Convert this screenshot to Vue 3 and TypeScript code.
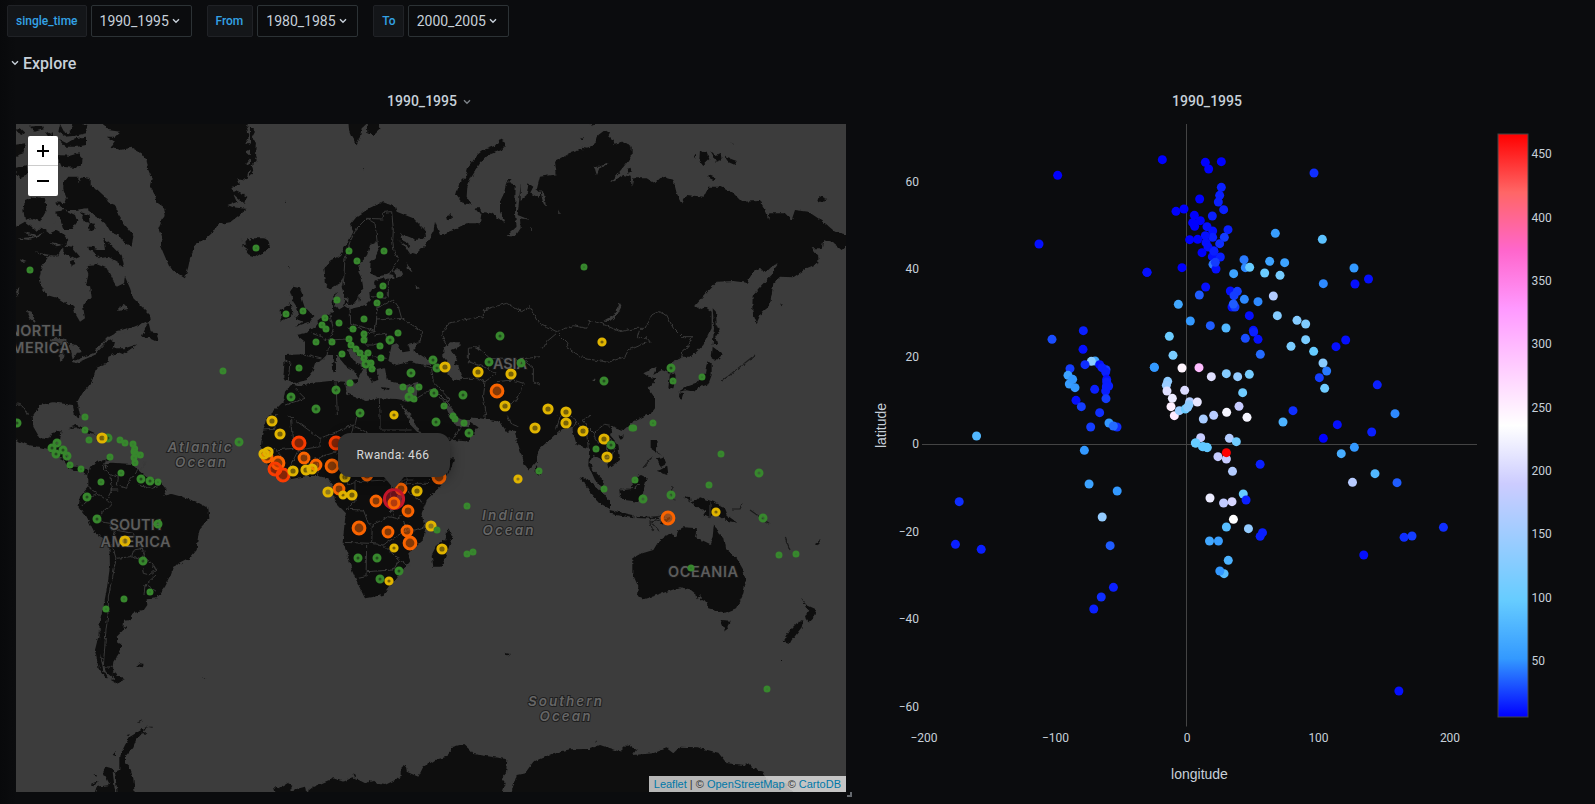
<script setup lang="ts">
interface Tile { x: number; y: number; w: number; h: number; ox: number; oy: number; land: string; water?: string; border?: string }

const variables = [
  { label: 'single_time', value: '1990_1995' },
  { label: 'From', value: '1980_1985' },
  { label: 'To', value: '2000_2005' },
]

// Map tiles hold their outlines at three units per screen pixel.
const tiles: Tile[] = [
  {
    x: 0, y: 115, w: 250, h: 300, ox: 0, oy: 0,
    land: 'M310,27L325,45 360,50 345,65 320,65 345,80 335,95 360,105 395,98 425,115 440,135 445,165 455,190 450,215 465,240 470,262 490,275 497,300 485,315 475,340 485,370 480,390 495,425 510,460 530,475 555,490 565,455 570,430 585,390 610,378 640,350 655,328 690,322 725,295 742,282 700,277 682,270 710,260 700,238 735,267 742,245 700,225 695,215 720,210 712,190 738,195 745,170 762,150 735,148 755,125 738,110 765,95 738,85 748,60 740,40 745,20 310,20Z M722,372L735,385 745,372 755,385 770,370 785,380 800,368 808,395 790,418 765,427 745,418 735,405 745,400 725,392 740,388Z M48,335L75,320 95,335 110,350 125,335 150,355 170,345 195,360 205,375 190,395 175,420 145,425 125,455 118,490 128,520 140,540 175,550 205,570 220,570 225,595 240,620 255,610 250,580 255,565 275,545 270,515 258,510 265,480 260,450 290,448 320,460 335,490 350,515 372,505 375,485 390,520 400,550 430,580 450,600 452,615 395,638 350,648 320,672 345,668 345,700 375,700 412,688 370,718 355,712 325,725 322,742 290,755 275,800 240,845 232,860 240,900 225,900 218,870 160,862 120,870 100,900 40,900 40,335Z M445,620L425,665 445,668 470,680 475,672 468,655 452,652 450,640Z M190,205L205,185 235,185 235,205 250,185 272,190 272,212 290,222 315,245 325,262 345,270 355,300 375,330 400,360 395,395 375,385 355,360 330,350 315,325 285,300 260,280 225,285 200,285 165,262 195,265 200,250 190,225Z M310,370L335,390 365,420 372,455 350,440 325,425 300,430 270,400 295,405 315,405Z M175,72L200,85 225,70 258,65 258,90 230,95 195,95Z M170,120L210,122 235,115 248,130 245,155 220,158 185,155Z M180,27L192,50 205,58 220,30 240,27 262,30 258,55 225,62 195,65 175,50Z M48,45L62,40 78,55 60,60Z M90,35L125,30 130,42 105,50Z M40,90L75,85 70,115 40,125Z M40,160L80,150 85,180 60,190Z M70,285L75,255 100,245 135,250 140,285 120,320 95,310 75,315Z M165,290L195,285 225,300 232,320 215,345 190,345 180,310Z M240,290L265,300 270,325 255,320Z M190,390L215,395 240,425 225,432 190,415Z M265,330L280,325 285,340 270,348Z M210,440l12,-5 4,12 -14,5Z M265,395l15,0 5,15 -18,-5Z M135,50l12,8 12,-6 0,8 -15,4Z M852,258l6,-4 0,6Z',
    water: 'M145,680L165,665 195,672 205,685 185,690Z M178,700L190,700 190,735 180,740Z M205,685L230,690 245,710 230,715 218,735 212,700Z M216,740L290,710 292,716 225,746Z M285,706L325,665 380,640 385,645 330,670 290,714Z M325,665L350,655 355,690 340,700 345,680 325,672Z M80,585L95,590 107,622 90,610Z M60,430l20,8 -15,4Z M105,412L180,425 178,430 125,420Z M150,380L190,390 170,394Z M48,370l70,-5 -30,10Z M355,575l20,-5 10,12 -30,6Z M48,530l10,-15 -4,30Z M70,350l40,10 20,-8 -18,18Z M155,310l10,5 5,20 -10,-8Z',
    border: 'M48,868C65,862 75,885 82,900',
  },
  {
    x: 250, y: 115, w: 290, h: 300, ox: 0, oy: 0,
    land: 'M0,370L40,370 52,372 60,395 40,412 15,427 0,422Z M0,35L15,50 5,70 18,80 15,120 20,138 5,150 10,165 0,185Z M295,20L385,20 388,45 372,60 352,52 350,27 335,40 330,65 320,88 305,65 297,45Z M765,80L750,72 735,92 700,105 675,125 655,155 645,190 628,205 618,240 635,262 665,270 650,245 652,215 665,185 690,145 715,120 755,105 765,92Z M220,460L225,505 240,522 270,505 280,490 275,515 282,545 295,572 315,565 325,540 340,520 335,490 325,470 330,445 350,425 360,390 380,380 390,395 375,430 362,440 360,470 375,485 420,478 430,480 430,492 390,490 372,500 375,520 358,530 360,555 345,570 330,575 300,582 285,572 265,585 255,570 250,545 265,530 250,540 248,560 250,590 230,600 205,620 190,640 165,655 140,660 165,680 165,718 105,720 100,790 125,800 135,807 150,800 170,795 185,775 195,745 215,735 230,720 260,720 285,750 310,765 325,790 335,772 335,760 348,762 310,735 290,705 305,700 330,730 350,755 350,775 365,800 385,795 380,765 405,760 410,790 430,805 470,810 505,800 500,845 475,858 440,852 385,850 350,858 315,845 290,835 285,800 240,798 175,805 150,815 125,808 105,830 100,860 60,900 870,900 870,250 840,235 850,215 835,205 830,240 812,255 812,205 808,250 803,300 840,315 810,310 812,340 795,365 770,363 800,335 795,300 797,210 770,200 762,235 750,260 750,290 765,325 725,295 695,290 690,325 650,325 610,345 570,360 555,320 550,350 530,385 500,415 480,408 475,385 455,375 450,355 500,375 528,365 525,345 490,310 440,290 435,275 400,262 380,270 350,285 320,305 300,330 310,350 295,380 270,420 240,440Z M130,515L150,520 160,540 155,550 165,580 190,605 180,620 135,635 158,620 135,610 147,600 140,575 130,560 120,530Z M92,585L122,565 128,600 95,618Z M295,795L325,792 320,806Z M245,745L258,745 258,770 247,772Z M250,720h8v20h-6Z M395,817L422,820 420,825 395,822Z M475,815l18,-7 -6,12Z M285,545l8,2 -2,18 -12,8Z M325,545l6,0 -4,18Z M870,185V235L860,225Z M675,280l15,0 5,18 -12,-8Z M590,300l12,-2 4,12 -12,6Z M773,190l12,4 -8,10Z M103,258l5,-2 -2,7Z M338,160l4,0 0,3Z M117,450l3,0 0,12Z',
    water: 'M415,738L425,690 440,685 458,712 480,708 475,690 505,682 490,705 520,725 545,740 540,750 510,748 480,740 440,750Z M580,705L600,682 630,682 628,695 605,705 622,735 612,745 625,752 637,792 610,795 592,775 595,745 580,725Z M430,465L448,462 457,482 440,488Z M470,440l10,20 8,12 -14,-8Z M495,510l15,10 -8,2Z M445,375L475,395 490,412 478,418 460,390Z M578,855L600,872 622,900 598,900Z M450,863L468,885 485,900 470,900 458,882Z M675,700l14,-6 -2,12Z M840,335l8,8 -5,2Z',
    border: 'M280,510L285,430 300,380 320,340 350,310 375,325 382,385 M350,310L400,312 400,292 425,290 430,340 428,380 432,410 445,435 415,480 M300,575L302,625 345,638 375,650 380,610 380,580 430,555 445,575 455,610 380,615 M455,610L518,650 510,680 470,690 M380,615L375,650 345,655 M415,490L415,550 M365,545L410,550 M185,655L215,665 240,680 230,725 M240,600L250,640 240,675 290,672 M290,640L330,640 350,655 345,690 370,690 390,685 M165,720L215,732 M105,735L120,740 115,795 M370,660L405,655 420,690 M365,725L410,730 M340,710L360,740 380,765 M135,820L165,850 105,870 M258,800L262,900 M388,852L390,900 M470,860L500,850 550,820 600,870 M520,750L550,760 575,760 M545,762L550,800 600,855 M575,660L595,625 640,615 700,605 700,585 770,565 815,590 840,575 865,625 M655,745L655,700 680,695 720,730 790,735 870,725 M635,790L680,790 705,800 740,775 700,755 655,740 M705,800L700,850 710,900 M740,800L790,795 820,805 800,860 750,870 M820,735L850,760 850,800 870,810 M575,660L590,690 M550,820L570,850 600,858',
  },
  {
    x: 540, y: 115, w: 306, h: 300, ox: 0, oy: 0,
    land: 'M0,185L50,178 45,140 90,115 150,95 170,80 175,60 195,45 210,55 205,65 222,75 220,90 255,82 275,95 275,125 255,150 210,205 250,180 272,185 275,215 280,190 320,190 345,205 365,185 400,195 410,235 425,265 440,240 490,245 505,215 540,215 580,235 605,260 660,258 670,275 685,315 688,295 735,295 755,315 765,285 805,290 850,320 885,350 925,360 925,385 905,405 880,385 850,375 845,400 815,400 835,425 835,445 800,460 760,487 720,485 700,505 690,570 665,590 650,625 637,590 638,540 665,510 700,475 713,445 700,450 675,475 660,458 640,470 620,503 580,498 530,500 500,530 463,572 480,583 495,575 515,590 515,640 490,690 455,725 430,725 395,745 408,790 400,820 385,820 390,775 365,765 340,780 350,755 310,775 325,785 350,790 325,820 345,850 345,880 330,900 0,900Z M518,580L528,590 530,630 540,655 525,660 532,690 518,690 522,640Z M518,695L548,718 528,737 515,730Z M503,735L515,745 515,780 505,808 475,818 462,830 440,826 415,830 440,815 470,805 495,775Z M418,832L430,835 424,855 417,845Z M480,105L500,110 508,132 490,150 478,135Z M510,105L525,120 542,115 545,135 530,140Z M555,125L590,138 585,150 558,138Z M505,180L530,190 520,198 508,192Z M832,255L845,245 862,252 850,258 835,262Z M260,162l12,-4 2,10 -8,6Z M120,70l12,-5 -4,8Z M152,27l12,0 -8,7Z M125,95l25,5 5,10 -25,5Z M720,565l8,6 -3,3Z M463,118l5,0 0,14Z M575,82l6,0 -2,4Z',
    water: 'M240,560L244,575 232,600 210,618 193,617 220,602Z M160,155L180,155 205,145 203,152 178,160 170,180 165,162Z M0,225L12,235 18,275 10,265Z M54,283l5,14 -4,0Z M158,794h8v4h-8Z',
    border: 'M0,625L20,635 50,650 100,632 140,640 150,615 200,632 240,650 290,640 315,640 335,600 355,590 380,600 400,640 425,665 457,665 440,700 428,710 425,730 395,745 M50,650L80,680 85,700 130,730 205,742 255,725 265,705 300,690 330,680 320,668 292,668 300,640 M0,700L10,700 20,680 50,655 M378,775L405,772',
  },
  {
    x: 0, y: 415, w: 250, h: 275, ox: 0, oy: 75,
    land: 'M40,0L260,0 235,35 242,60 240,85 230,80 218,45 160,38 120,45 98,75 100,110 120,145 145,148 155,130 185,120 180,150 165,160 195,175 203,212 215,230 240,230 265,240 262,252 240,245 205,235 190,207 165,198 145,178 115,170 85,165 40,147Z M205,115L230,105 260,118 290,132 265,128 235,112Z M290,135L335,140 330,155 290,152Z M265,250L270,230 300,212 335,205 312,215 315,225 335,218 395,222 420,245 440,262 480,275 500,300 490,318 515,312 545,320 590,335 625,355 628,385 600,415 593,445 590,480 570,505 520,530 510,560 495,590 470,625 440,628 442,645 430,662 398,670 395,690 372,692 370,720 350,740 352,758 365,765 360,785 340,815 338,830 350,855 372,870 350,880 315,860 295,830 285,780 295,740 300,690 310,650 320,600 330,530 328,460 310,445 285,430 260,380 236,350 240,320 265,290Z M408,828L420,820 432,822 428,832Z M605,858L620,868 615,868Z M372,708l12,2 -8,8Z',
    water: 'M315,222l10,5 -6,10Z M298,700l3,30 -3,20Z M300,790l20,60 -10,-4Z M312,840l30,28 -14,2Z',
    border: 'M48,45C68,38 72,60 95,78 M312,218L310,240 355,262 352,285 380,295 385,275 415,240 M265,292L320,330 335,345 300,375 300,395 330,400 345,430 335,460 348,505 M245,345L275,320 290,310 M320,330L335,300 330,260 M355,300L330,300 M415,285L450,295 480,285 M348,505L395,500 425,510 430,495 400,430 345,420 M395,500L400,480 430,475 435,505 455,520 468,540 450,555 430,550 428,535 M348,505L338,560 325,620 325,660 318,720 312,800 310,830 338,832 M468,555L435,585 432,615 M435,580L470,605 M340,832V870 M437,215L420,240',
  },
  {
    x: 250, y: 415, w: 220, h: 195, ox: 30, oy: 135,
    land: 'M90,0L690,0 690,150 672,155 640,145 608,100 630,140 650,165 690,172 690,215 640,210 560,232 545,190 520,160 490,105 520,165 545,195 562,230 600,270 642,265 635,290 610,340 560,390 545,430 555,480 550,510 505,550 510,575 475,615 430,675 375,685 360,655 335,600 325,560 308,515 315,450 318,430 285,395 280,350 262,325 235,318 200,318 140,330 110,320 80,280 62,245 65,200 80,145 115,115Z M625,475L638,500 620,550 605,590 580,590 575,555 590,525 615,510Z M55,118l6,-4 0,6Z',
    water: 'M492,105L520,150 542,188 560,230 600,212 560,240 540,195 512,165Z M608,100L640,138 670,150 690,150 690,172 650,168 625,138Z M470,375l18,2 0,20 -15,3Z M450,400l6,25 -6,5Z M508,455l5,35 -4,0Z',
    border: 'M65,180L105,178 105,140 130,125 M130,125L240,205 340,165 420,210 M152,150L160,235 105,240 M240,205L240,230 175,240 150,290 M420,80V180H515 M340,165L325,235 290,250 M65,240L105,238 130,265 M175,240L215,270 290,245 M150,290V325 M205,270L200,318 M232,265L235,318 M325,235L310,310 M310,310L325,345 345,335 440,330 520,330 M420,210L430,260 M345,335L345,395 318,418 M318,418L370,420 385,460 397,465 395,520 308,517 M397,465L445,440 470,445 500,430 M395,520L430,525 460,505 500,480 490,450 M430,525L478,570 460,600 380,605 M380,525L378,620 355,625 M460,440L450,400 455,345 520,340 M500,360L550,400 M520,340L560,340 600,300 M500,345L495,290 M478,570L510,590 M495,480L525,480 555,470 M590,215L640,205 660,175 M545,205L600,215 M360,95L345,165 M105,238L65,250',
  },
  {
    x: 470, y: 415, w: 376, h: 225, ox: 30, oy: 75,
    land: 'M0,0L585,0 585,30 560,75 520,95 490,120 460,110 450,135 475,165 480,210 445,235 440,215 410,200 400,195 390,215 395,235 430,270 425,290 405,270 385,225 388,175 370,170 350,165 335,110 300,120 235,180 230,215 208,240 195,225 170,150 165,122 140,125 120,95 60,85 0,80Z M0,95L30,95 55,112 30,145 0,160Z M360,262L385,270 430,310 450,335 450,357 420,340 390,305Z M448,360L520,375 520,385 455,372Z M530,378l65,4 0,5 -65,-3Z M600,396L625,382 632,386 605,402Z M478,298L510,295 540,255 560,265 548,310 535,335 495,330 480,318Z M575,150L590,150 588,180 602,195 575,178Z M600,240L622,228 625,255 608,250 590,242Z M590,205l20,-5 8,22 -14,8 -8,-12Z M670,318L690,322 692,335 710,332 720,322 760,335 790,350 800,375 832,398 800,392 765,370 750,385 730,375 738,362 710,350 690,335Z M517,505L540,492 580,480 595,455 630,430 650,440 655,420 670,412 712,415 705,440 750,462 758,440 762,402 775,430 790,445 795,475 830,505 850,540 857,575 850,610 828,655 795,668 745,655 735,630 722,636 722,612 710,628 705,610 690,598 660,592 620,605 590,615 550,628 530,620 535,590 517,550Z M782,690L812,692 805,715 795,722Z M1022,625L1040,645 1068,658 1062,680 1045,697 1035,680 1045,660Z M1030,690L1025,712 1000,745 990,755 970,750 985,725 1010,700Z M475,140L492,136 483,150Z M228,225L242,245 235,257 227,248Z M660,0L685,0 670,25 658,20Z M573,95l12,0 -4,14Z M1062,462l20,-12 -10,16Z',
    border: 'M60,20L75,45 130,40 185,10 200,20 230,40 M75,45V85 M130,40L150,100 175,110 M185,10L230,40 285,65 340,60 370,45 390,75 370,90 380,110 400,130 M290,60L300,80 290,115 M320,70L350,95 335,120 M340,60L375,60 M230,40L235,55 290,75 M400,130L430,105 460,110 M400,130L410,155 440,160 440,185 M385,175L380,130 350,95 M440,130L465,170 455,200 430,205 M480,300L520,295 540,280 M750,335V385',
  },
  {
    x: 0, y: 690, w: 430, h: 114, ox: 0, oy: 270,
    land: 'M280,590L290,560 330,555 310,515 318,500 335,505 345,515 358,510 358,470 375,435 390,410 440,380 435,390 408,420 400,440 375,470 375,490 388,500 400,535 405,590Z M275,552l20,-8 0,6 -15,6Z M280,525l10,0 0,5Z M338,465l10,-12 0,15Z M380,405l10,-2 -5,6Z M425,390l14,12 -6,2Z M410,368l20,-8 -12,8Z M440,380l18,0 0,3Z M920,590L920,576 940,560 1000,535 1030,545 1060,532 1100,552 1112,540 1125,550 1155,555 1205,530 1205,495 1218,500 1220,515 1255,530 1270,500 1290,488V590Z M830,590L822,562 838,565 865,548 878,555 870,572 915,560 920,590Z M1060,520l8,5 -4,5Z',
    water: 'M338,515L345,518 353,580 346,580Z',
  },
  {
    x: 430, y: 640, w: 416, h: 164, ox: 30, oy: 120,
    land: 'M0,525L15,500 45,480 80,470 100,440 130,432 150,450 160,462 262,478 258,520 245,535 257,550 243,590 0,590Z M270,590L290,525 315,520 340,485 400,460 450,448 510,447 540,435 600,455 625,432 650,450 640,465 700,460 740,445 760,460 780,440 830,442 895,458 920,490 975,495 980,485 1000,505 1030,515 1040,540 1100,550 1125,590Z M254,158L270,162 262,168Z M1088,122L1095,110 1130,90 1110,130Z M524,425l6,0 0,4Z M1083,180h3v5h-3Z',
  },
]

// Thin island arcs, in screen pixels.
const islands = 'M665,516L652,517 650,522 653,531M652,522L659,520M653,523L659,531M672,487L671,496 675,500M732,509L740,509 743,503M750,510L770,524M785,537L790,550M643,468L652,457M755,355L722,381'

type Kind = 'g' | 'G' | 'y' | 'Y' | 'o' | 'O' | 'r' | 'R'
const kinds: Record<Kind, { c: string; r: number }> = {
  g: { c: '#37872d', r: 2 }, G: { c: '#37872d', r: 3 },
  y: { c: '#e0b400', r: 3.1 }, Y: { c: '#e0b400', r: 4.1 },
  o: { c: '#fa6400', r: 4.9 }, O: { c: '#fa6400', r: 5.9 },
  r: { c: '#fa3c00', r: 6 }, R: { c: '#c4162a', r: 9.6 },
}

function read(ox: number, oy: number, sx: number, source: string) {
  return source.trim().split(/\s*;\s*/).map((entry) => {
    const [x, y, tag] = entry.split(' ')
    return { x: ox + Number(x) / sx, y: oy + Number(y) / 3, tag }
  })
}

const markers = [
  ...read(0, 115, 3, '90 465 g;768 399 g;669 768 g'),
  ...read(250, 115, 3, '297 408 g;402 408 g;321 438 g;399 513 g;390 540 g;381 564 g;261 555 g;417 591 g;159 588 g;108 597 g;225 609 g;216 630 g;228 642 g;267 624 g;342 612 g;309 642 g;342 657 g;342 675 g;444 654 g;420 675 G;390 693 g;198 681 g;246 681 g;297 672 g;303 690 g;318 702 g;330 714 g;354 714 g;342 729 g;276 717 g;393 729 g;348 747 G;363 744 g;366 762 g;147 759 g;300 804 g;258 825 G;123 846 G;198 882 G;330 894 G;483 774 G;549 735 G;561 759 G;585 756 Y;459 816 g;507 816 g;483 825 g;477 846 G;492 852 g;552 834 G;582 873 g;639 840 G;684 771 Y;717 741 G;750 663 G;783 777 Y;813 744 G;741 828 O;765 873 Y'),
  ...read(540, 115, 3, '132 456 g;186 681 y;192 798 G;393 759 G;399 798 g;486 786 g'),
  ...read(0, 390, 3, '51 99 G;255 81 g;255 120 g;267 150 g;324 144 G;306 144 Y;360 150 g;375 159 g;399 162 g;404 176 g;402 185 g;408 192 g;421 195 g;402 203 g;405 218 g;330 201 g;171 159 G;156 174 G;189 180 G;168 192 G;201 198 G;210 225 g;243 237 g;303 276 g;363 249 g;423 267 G;450 273 G;474 276 g;261 321 G;291 387 G;474 402 G;375 453 Y;429 513 G;450 606 g;372 627 g;318 657 g;717 156 G'),
  ...read(240, 370, 3, '462 135 y;588 156 G;639 138 g;645 147 g;672 159 g;687 189 G;96 153 Y;120 192 Y;81 261 o;72 252 Y;84 246 Y;114 279 O;105 297 r;129 315 r;159 303 Y;177 219 r;192 264 o;288 219 r;228 285 o;198 300 Y;216 297 Y;276 288 O;315 321 Y;381 315 o;597 321 O;297 357 o;264 366 Y;309 375 y;336 375 Y;408 393 o;483 357 o;531 363 Y;462 387 R;462 399 o;504 423 o;357 474 O;444 486 o;501 483 o;510 519 O;462 534 y;354 564 G;411 564 G;477 603 G;420 627 G;447 633 y;573 468 Y;591 480 g;606 537 Y;681 408 g;681 552 g;699 546 g'),
  ...read(460, 390, 3, '264 57 Y;318 66 Y;318 99 Y;225 114 Y;369 123 Y;432 147 Y;453 165 G;408 177 g;441 201 Y;516 114 g;521 114 g;579 99 g;237 243 g;174 267 y;525 270 g;432 297 g;549 327 G;633 315 G;624 384 O;768 366 y;747 285 g;783 192 g;897 249 G;909 384 G;957 495 g;1008 492 g;693 534 g'),
  ...read(420, 600, 3, '1041 267 g'),
].map(m => ({ ...m, ...kinds[m.tag as Kind] }))

const stops: [number, number, number][] = [
  [0, 0, 255], [51, 153, 255], [102, 204, 255], [153, 204, 255], [204, 204, 255], [255, 255, 255],
  [255, 204, 255], [255, 153, 255], [255, 102, 204], [255, 102, 102], [255, 0, 0],
]
const rgb = (c: number[]) => `rgb(${c.map(Math.round).join(',')})`
function colorAt(percent: number) {
  const i = Math.min(9, Math.floor(percent / 10))
  const t = percent / 10 - i
  return rgb(stops[i].map((v, k) => v + (stops[i + 1][k] - v) * t))
}

// Third field of each point: percentage along the colour scale.
const dots = [
  ...read(860, 110, 3, '593 196 0;537 402 1;861 487 1;670 662 2;576 688 5;669 718 1;705 753 13;694 754 27;675 764 3;630 776 4;738 779 4;719 764 1;726 773 2;737 786 2;740 808 1;746 828 2;740 816 2;740 828 2;737 843 2;739 831 2;738 866 4;704 838 2;624 796 12;628 822 11;638 808 10;645 833 10;648 871 1;664 890 4;719 908 3;692 951 4;771 951 3;747 939 10;760 948 7;883 772 9'),
  ...read(1120, 130, 3, '127 89 0;256 97 0;304 95 0;266 117 0;582 129 3;304 172 2;299 196 2;295 216 2;239 207 0;192 237 0;168 244 0;311 239 2;277 258 2;223 256 0;218 278 0;241 272 0;224 289 0;261 290 1;278 303 1;324 299 2;278 322 2;256 317 1;209 329 0;233 328 0;258 338 1;313 322 4;299 341 3;264 351 1;246 368 0;281 362 1;277 380 1;301 381 2;279 403 8;282 364 2;288 417 1;286 397 4;186 413 0;81 427 1;257 471 1;238 495 6;331 483 1;352 484 4;342 497 4;336 531 1;345 531 4;340 522 6;341 431 12;372 389 8;376 413 9;389 412 20;466 310 11;607 328 18;449 394 12;494 398 12;434 429 21;480 436 23;610 461 9;373 508 9;414 515 9;460 498 35;472 557 26;175 523 13;211 573 10;271 587 6;318 594 16;388 557 1;400 601 1;401 606 2;414 628 1;376 625 5;421 673 7;531 571 26;557 582 25;557 629 24;513 649 24;581 664 20;648 650 1;609 699 27;620 723 8;598 743 4;614 775 22;148 619 21;159 676 24;103 712 10;186 714 52;237 713 63;274 740 44;319 731 26;353 740 29;388 733 23;368 788 22;143 754 28;139 766 30;141 783 44;194 781 43;157 805 46;153 830 53;163 857 54;178 842 30;196 837 21;209 815 35;207 824 28;203 832 27;232 816 45;250 867 33;281 856 36;320 847 48;357 829 39;381 862 48;519 842 3;489 876 15;652 884 1;610 925 0;242 923 39;226 939 22;250 950 20;261 952 20;328 925 35;349 935 22'),
  ...read(0, 0, 1, '1354 804 10;1368.5 837 1;1355 852 1;1345.7 1020 1;1377.3 1154.5 2;1395 1241 9'),
  ...read(860.3, 420, 2.1333, '1091 36 2;248 48 16;478 91 10;488 192 12;548 213 10;211 245 3;203 373 2;258 388 2;516 291 29;533 377 6;540 502 2;514 531 3;498 567 2;716 69 20;730 80 19;740 83 19;763 110 39;781 117 39;781 98 100;794 154 35;853 133 2;1026 101 14;1054 82 10;1050 187 36;1098 161 16;1145 188 6;817 222 20;823 240 2;746 234 46;775 249 38;793 245 42;796 298 50;781 321 17;828 326 29;858 338 2;853 349 2;745 363 13;764 363 11;785 421 15;776 461 17;767 453 10;1160 352 3;1177 348 4;1244 322 3;1074 405 1;1149 813 1'),
].map(d => ({ ...d, color: colorAt(Number(d.tag)) }))

const yTicks = [60, 40, 20, 0, -20, -40, -60]
const xTicks = [-200, -100, 0, 100, 200]
const scaleTicks = [50, 100, 150, 200, 250, 300, 350, 400, 450]
const signed = (n: number) => (n < 0 ? `−${-n}` : `${n}`)
</script>

<template>
  <main class="dashboard">
    <nav class="variables">
      <div v-for="v in variables" :key="v.label" class="variable">
        <label class="name">{{ v.label }}</label>
        <button class="value">
          <span>{{ v.value }}</span>
          <svg width="8" height="6" viewBox="0 0 8 6"><path d="M1,1.2L4,4.2 7,1.2" /></svg>
        </button>
      </div>
    </nav>
    <h2 class="row-title">
      <svg width="8" height="6" viewBox="0 0 8 6"><path d="M1,1.2L4,4.2 7,1.2" /></svg>
      <span>Explore</span>
    </h2>

    <div class="panels">
      <section class="panel map-panel">
        <header class="title">
          <span>1990_1995</span>
          <svg class="dim" width="8" height="6" viewBox="0 0 8 6"><path d="M1,1.2L4,4.2 7,1.2" /></svg>
        </header>
        <div class="map">
          <svg class="world" width="830" height="668" viewBox="16 124 830 668">
            <defs>
              <filter id="coast" x="0" y="0" width="100%" height="100%" color-interpolation-filters="sRGB">
                <feTurbulence type="fractalNoise" baseFrequency="0.22" numOctaves="2" seed="4" />
                <feDisplacementMap in="SourceGraphic" scale="4" xChannelSelector="R" yChannelSelector="G" />
              </filter>
            </defs>
            <rect x="16" y="124" width="830" height="668" class="ocean" />
            <g filter="url(#coast)">
              <rect x="16" y="124" width="830" height="668" class="ocean" />
              <svg
                v-for="(t, i) in tiles" :key="i" :x="t.x" :y="t.y" :width="t.w" :height="t.h"
                :viewBox="`${t.ox} ${t.oy} ${t.w * 3} ${t.h * 3}`"
              >
                <path class="land" :d="t.land" />
                <path v-if="t.water" class="ocean" :d="t.water" />
                <path v-if="t.border" class="border" :d="t.border" />
              </svg>
              <path class="islands" :d="islands" />
            </g>
            <g class="continent">
              <text x="9" y="335.5" textLength="53">NORTH</text>
              <text x="0" y="352.5" textLength="70">AMERICA</text>
              <text x="109.5" y="529.5" textLength="52">SOUTH</text>
              <text x="100.5" y="546.5" textLength="70">AMERICA</text>
              <text x="493" y="369" textLength="34">ASIA</text>
              <text x="668" y="577" textLength="70">OCEANIA</text>
            </g>
            <g class="sea">
              <text x="167.5" y="451.5" textLength="64">Atlantic</text>
              <text x="175" y="466.5" textLength="51">Ocean</text>
              <text x="482" y="519.5" textLength="52">Indian</text>
              <text x="482.5" y="534.5" textLength="51">Ocean</text>
              <text x="528" y="705.5" textLength="74">Southern</text>
              <text x="539.5" y="720.5" textLength="51">Ocean</text>
            </g>
            <circle
              v-for="(m, i) in markers" :key="i" :cx="m.x" :cy="m.y" :r="m.r"
              :fill="m.c" :stroke="m.c" fill-opacity="0.5" stroke-width="3"
            />
          </svg>
          <div class="zoom">
            <button><svg width="12" height="12" viewBox="0 0 12 12"><path d="M0,6H12M6,0V12" /></svg></button>
            <button><svg width="12" height="12" viewBox="0 0 12 12"><path d="M0,6H12" /></svg></button>
          </div>
          <div class="popup">Rwanda: 466</div>
          <div class="credit"><a>Leaflet</a> | © <a>OpenStreetMap</a> © <a>CartoDB</a></div>
        </div>
        <i class="resize" />
      </section>

      <section class="panel plot-panel">
        <header class="title"><span>1990_1995</span></header>
        <svg class="plot" width="731" height="680" viewBox="864 124 731 680">
          <defs>
            <linearGradient id="scale" x1="0" y1="1" x2="0" y2="0">
              <stop v-for="(s, i) in stops" :key="i" :offset="i / 10" :stop-color="rgb(s)" />
            </linearGradient>
          </defs>
          <path class="axis" d="M922,444.5H1477M1186.5,124V726.5" />
          <circle v-for="(d, i) in dots" :key="i" :cx="d.x" :cy="d.y" r="4.5" :fill="d.color" />
          <text v-for="n in yTicks" :key="'y' + n" x="919" :y="448 - n * 4.375" text-anchor="end">{{ signed(n) }}</text>
          <text v-for="n in xTicks" :key="'x' + n" :x="1187 + n * 1.315" y="742" text-anchor="middle">{{ signed(n) }}</text>
          <text class="axis-name" x="1199.5" y="779" text-anchor="middle">longitude</text>
          <text class="axis-name" transform="translate(885.5,425.5) rotate(-90)" text-anchor="middle">latitude</text>
          <rect x="1498" y="134" width="30" height="583" fill="url(#scale)" stroke="#444" />
          <text v-for="n in scaleTicks" :key="'s' + n" x="1531.5" :y="728.5 - n * 1.267">{{ n }}</text>
        </svg>
      </section>
    </div>
  </main>
</template>

<style>
body { background: #0b0c0e; overflow: hidden; }
</style>

<style scoped>
.dashboard { height: 804px; overflow: hidden; color: #c7d0d9; font-family: Roboto, "Liberation Sans", sans-serif; background: linear-gradient(90deg, #08090b 0, #0b0c0e 16px); }
svg { display: block; }
button { font: inherit; color: inherit; }
.variables { display: flex; gap: 15px; padding: 5px 0 0 7px; }
.variable { display: flex; gap: 4px; }
.name, .value { height: 32px; box-sizing: border-box; border-radius: 2px; display: flex; align-items: center; }
.name { padding: 0 8px; background: #141619; border: 1px solid #202226; color: #33a2e5; font-size: 12px; font-weight: 500; }
.variable:nth-child(2) .name { padding-right: 9px; }
.variable:nth-child(3) .name { padding-right: 7px; }
.value { width: 101px; padding: 0 0 0 8px; background: #0b0c0e; border: 1px solid #2c3235; font-size: 14px; gap: 3px; }
.value svg path, .row-title path, .title path { fill: none; stroke: #c7d0d9; stroke-width: 1.4; }
.row-title { display: flex; align-items: center; gap: 4px; height: 20px; margin: 16px 0 0 11px; font-size: 16px; font-weight: 500; }
.panels { display: flex; margin-top: 14px; }
.panel { height: 717px; flex: none; position: relative; }
.map-panel { width: 848px; padding-left: 16px; box-sizing: border-box; }
.plot-panel { width: 731px; margin-left: 16px; }
.title { height: 37px; box-sizing: border-box; padding-top: 1px; display: flex; align-items: flex-start; justify-content: center; font-size: 14px; line-height: 27px; font-weight: 500; }
.map-panel .title { padding-left: 10px; margin-right: 16px; gap: 6px; }
.title svg { margin-top: 11px; }
.title .dim { opacity: .6; }
.plot-panel .title { padding-right: 45px; }
.map { width: 830px; height: 668px; position: relative; overflow: hidden; background: #3c3c3c; }
.ocean { fill: #3c3c3c; }
.land { fill: #0e0e0e; }
.border { fill: none; stroke: #393939; stroke-width: 3; }
.islands { fill: none; stroke: #1b1b1b; stroke-width: 1.2; }
.continent { font: 600 14.5px Inter, sans-serif; }
.sea { font: italic 600 13.5px Inter, sans-serif; }
.continent text, .sea text { fill: #5c5c5c; stroke: #181818; stroke-width: 2px; paint-order: stroke; stroke-opacity: .8; }
.sea text { fill: #666; }
.zoom { position: absolute; left: 12px; top: 12px; width: 30px; border-radius: 2px; overflow: hidden; }
.zoom button { width: 30px; height: 30px; padding: 0; border: 0; background: #fff; display: grid; place-items: center; }
.zoom button:first-child { height: 29px; }
.zoom button + button { height: 31px; border-top: 1px solid #ccc; }
.zoom path { stroke: #000; stroke-width: 2; }
.popup { position: absolute; left: 322px; top: 309px; width: 112px; height: 44px; box-sizing: border-box; padding-right: 2px; border-radius: 12px; background: #333; box-shadow: 0 3px 14px rgba(0, 0, 0, .4); color: #d8d9da; font: 12px/44px Roboto, sans-serif; letter-spacing: .35px; text-align: center; }
.popup::after { content: ""; position: absolute; left: 46px; top: 44px; border: 10px solid transparent; border-top: 12px solid #333; border-bottom: 0; }
.credit { position: absolute; right: 0; bottom: 0; height: 16px; padding: 0 5px; background: rgba(255, 255, 255, .7); color: #333; font: 11px/16px "Liberation Sans", sans-serif; white-space: nowrap; }
.credit a { color: #0078a8; }
.resize { position: absolute; right: -4px; bottom: 7px; width: 3px; height: 3px; border: solid #65696e; border-width: 0 2px 2px 0; }
.plot text { fill: #c7d0d9; font: 12px Roboto, sans-serif; }
.plot .axis-name { font: 14px "Liberation Sans", sans-serif; }
.axis { stroke: #444; fill: none; }
</style>
